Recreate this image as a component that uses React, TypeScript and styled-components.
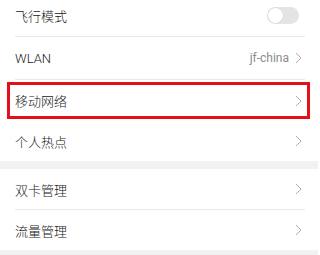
import { createGlobalStyle } from "styled-components";
import styled from "styled-components";

const GlobalStyle = createGlobalStyle`
  html, body {
    margin: 0;
    padding: 0;
    background: #ffffff;
  }
  body {
    font-family: Roboto, "Liberation Sans", "Noto Sans CJK SC", sans-serif;
    overflow: hidden;
  }
`;

const Page = styled.div`
  width: 318px;
  height: 255px;
  overflow: hidden;
  background: #f2f2f2;
`;

const List = styled.div`
  margin-top: -6px;
  display: flex;
  flex-direction: column;
`;

const Group = styled.div`
  background: #ffffff;
  display: flex;
  flex-direction: column;
`;

const GroupGap = styled.div`
  height: 8px;
  background: #f2f2f2;
`;

const Row = styled.div<{ $h: number }>`
  position: relative;
  height: ${({ $h }) => $h}px;
  display: flex;
  align-items: center;
  justify-content: space-between;
  padding: 0 16px 0 15px;
`;

const Divider = styled.div`
  height: 1px;
  margin: 0 13px 0 15px;
  background: #e9e9e9;
`;

const Label = styled.span`
  font-family: Roboto, "Noto Sans CJK SC", sans-serif;
  font-size: 13px;
  font-weight: 300;
  color: #202020;
`;

const Trailing = styled.div`
  display: flex;
  align-items: center;
  gap: 6px;
`;

const Value = styled.span`
  font-family: Roboto, "Noto Sans CJK SC", sans-serif;
  font-size: 12px;
  color: #8c8c8c;
`;

const Switch = styled.div`
  width: 32px;
  height: 17px;
  border-radius: 9px;
  background: #e4e4e4;
  display: flex;
  align-items: center;
  padding: 1px;
  box-sizing: border-box;
  margin-right: 3px;
`;

const Knob = styled.div`
  width: 15px;
  height: 15px;
  border-radius: 50%;
  background: #ffffff;
  box-shadow: 0 0 0 0.5px #d4d4d4;
`;

const Highlight = styled.div`
  position: absolute;
  top: 2px;
  bottom: 2px;
  left: 7px;
  right: 8px;
  border: 3px solid #e3101a;
  pointer-events: none;
`;

const Chevron = () => (
  <svg width="7" height="12" viewBox="0 0 7 12" fill="none">
    <path d="M1 1 L6 6 L1 11" stroke="#ababab" strokeWidth="1" />
  </svg>
);

export default function App() {
  return (
    <Page>
      <GlobalStyle />
      <List>
        <Group>
          <Row $h={42}>
            <Label>飞行模式</Label>
            <Switch>
              <Knob />
            </Switch>
          </Row>
          <Divider />
          <Row $h={42}>
            <Label>WLAN</Label>
            <Trailing>
              <Value>jf-china</Value>
              <Chevron />
            </Trailing>
          </Row>
          <Divider />
          <Row $h={41}>
            <Label>移动网络</Label>
            <Chevron />
            <Highlight />
          </Row>
          <Row $h={40}>
            <Label>个人热点</Label>
            <Chevron />
          </Row>
        </Group>
        <GroupGap />
        <Group>
          <Row $h={40}>
            <Label>双卡管理</Label>
            <Chevron />
          </Row>
          <Divider />
          <Row $h={40}>
            <Label>流量管理</Label>
            <Chevron />
          </Row>
        </Group>
        <GroupGap />
      </List>
    </Page>
  );
}
